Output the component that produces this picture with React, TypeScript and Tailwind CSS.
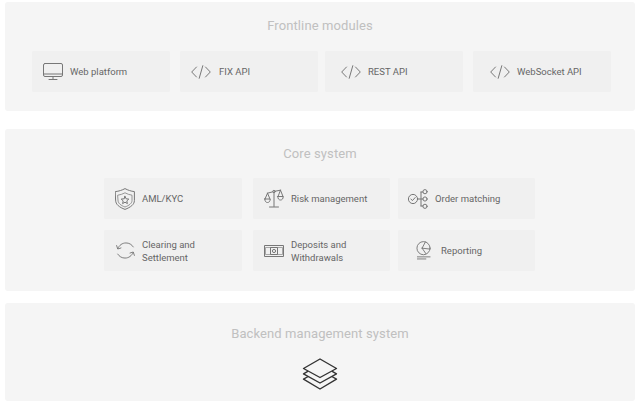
import React from "react";

type IconProps = { className?: string };

const base = {
  fill: "none",
  stroke: "currentColor",
  strokeWidth: 1,
  strokeLinecap: "round" as const,
  strokeLinejoin: "round" as const,
};

const MonitorIcon = ({ className }: IconProps) => (
  <svg viewBox="0 0 20 18" className={className} {...base}>
    <rect x="0.5" y="0.5" width="19" height="13" rx="1.5" />
    <path d="M0.5 11h19M10 13.5v3M6 16.5h8" />
  </svg>
);

const CodeIcon = ({ className }: IconProps) => (
  <svg viewBox="0 0 20 14" className={className} {...base}>
    <path d="M5.5 2 0.7 7l4.8 5M14.5 2l4.8 5-4.8 5M11.8 0.7 8.2 13.3" />
  </svg>
);

const ShieldIcon = ({ className }: IconProps) => (
  <svg viewBox="0 0 20 22" className={className} {...base}>
    <path d="M0.6 3.6C4 3.2 7 2.2 10 0.6c3 1.6 6 2.600 9.400 3V12.500c0 4-3.800 6.800-9.400 8.900C4.400 19.300 0.600 16.500 0.600 12.500Z" />
    <path d="M3 7.200C5.500 6.800 7.800 6 10 4.800c2.200 1.200 4.500 2 7 2.400V12.500c0 2.800-2.800 4.900-7 6.500C5.800 17.400 3 15.300 3 12.500Z" opacity="0.75" />
    <path d="m10 8.300 1.100 2.500 2.700.3-2 1.800.6 2.700-2.400-1.400-2.400 1.400.6-2.700-2-1.800 2.700-.3Z" />
  </svg>
);

const ScaleIcon = ({ className }: IconProps) => (
  <svg viewBox="0 0 20 19" className={className} {...base}>
    <path d="M10 3v14.500M5.500 18h9M3.500 4.200 8.800 2.800M11.200 2.200 16.500 1.200" />
    <circle cx="10" cy="2.500" r="1.200" />
    <path d="M3.500 4.200 1 10M3.500 4.200 6 10M16.500 1.200 14 7.500M16.500 1.200 19 7.500" />
    <path d="M0.800 10h5.400c0 2.200-1 3.500-2.700 3.500S0.800 12.200 0.800 10ZM13.800 7.500h5.400c0 2.200-1 3.500-2.700 3.500S13.800 9.700 13.800 7.500Z" />
  </svg>
);

const OrderIcon = ({ className }: IconProps) => (
  <svg viewBox="0 0 20 20" className={className} {...base}>
    <circle cx="5" cy="10" r="4.600" />
    <path d="m2.900 10 1.500 1.600 2.800-3.100" />
    <path d="M9.600 10h5.400M13 3v14M13 3h2M13 17h2" />
    <circle cx="17" cy="2.700" r="2.100" />
    <circle cx="17" cy="10" r="2.100" />
    <circle cx="17" cy="17.300" r="2.100" />
  </svg>
);

const RefreshIcon = ({ className }: IconProps) => (
  <svg viewBox="0 0 20 18" className={className} {...base}>
    <path d="M1.800 7C3.500 3.300 6.500 1 10.500 1c3.300 0 6 1.500 7.700 4.200" />
    <path d="M0.600 3.800 1.800 7.400 5.200 6.300" />
    <path d="M18.200 11C16.500 14.700 13.500 17 9.500 17c-3.300 0-6-1.500-7.700-4.200" />
    <path d="M19.400 14.200 18.200 10.600 14.800 11.700" />
  </svg>
);

const CashIcon = ({ className }: IconProps) => (
  <svg viewBox="0 0 20 12" className={className} {...base} strokeLinecap="butt">
    <rect x="0.500" y="0.500" width="19" height="11" />
    <path d="M1.500 2.500h17v7h-17Z" opacity="0.6" />
    <rect x="6.500" y="2.500" width="7" height="7" />
    <circle cx="10" cy="6" r="1.600" />
  </svg>
);

const ReportIcon = ({ className }: IconProps) => (
  <svg viewBox="0 0 16 20" className={className} {...base}>
    <circle cx="8" cy="7.500" r="7" />
    <path d="M6.500 7.500 10 0.900M6.500 7.500 15 8.500M6.500 7.500 10.500 13.300" />
    <path d="M1.500 16.800h13.500M1.500 19h9" />
  </svg>
);

const LayersIcon = ({ className }: IconProps) => (
  <svg viewBox="0 0 36 32" className={className} fill="none" stroke="currentColor" strokeWidth={1.4} strokeLinejoin="round">
    <path d="M18 1 34.500 10.500 18 19.500 1.500 10.500Z" />
    <path d="M6.200 13.200 1.500 15.800 18 25 34.500 15.800 29.800 13.200" />
    <path d="M6.200 18.500 1.500 21.200 18 31 34.500 21.200 29.800 18.500" />
  </svg>
);

const Card = ({
  icon,
  label,
  className,
}: {
  icon: React.ReactNode;
  label: React.ReactNode;
  className: string;
}) => (
  <div className={`h-[41px] flex items-center rounded-[1px] bg-[#f0f0f0] text-[#666] ${className}`}>
    {icon}
    <span className="text-[9.5px] leading-[13px]">{label}</span>
  </div>
);

const Title = ({ children, className }: { children: React.ReactNode; className: string }) => (
  <h2 className={`text-center text-[#c0c0c0] text-[13px] leading-5 font-normal tracking-[0.1px] ${className}`}>
    {children}
  </h2>
);

export default function App() {
  return (
    <div className="w-[640px] h-[406px] bg-white pt-[2px] px-[5px] overflow-hidden font-['Roboto',sans-serif]">
      <section className="h-[109px] rounded-[3px] bg-[#f5f5f5] pt-[14px]">
        <Title className="mb-[15px]">Frontline modules</Title>
        <div className="flex pl-[27px]">
          <Card
            className="w-[138px] pl-[11px]"
            icon={<MonitorIcon className="w-[20px] h-[18px] mr-[7px] text-[#777]" />}
            label="Web platform"
          />
          <Card
            className="w-[138px] ml-[10px] pl-[11px]"
            icon={<CodeIcon className="w-[20px] h-[14px] mr-[8px] text-[#777]" />}
            label="FIX API"
          />
          <Card
            className="w-[138px] ml-[7px] pl-[16px]"
            icon={<CodeIcon className="w-[20px] h-[14px] mr-[7px] text-[#777]" />}
            label="REST API"
          />
          <Card
            className="w-[138px] ml-[10px] pl-[17px]"
            icon={<CodeIcon className="w-[20px] h-[14px] mr-[7px] text-[#777]" />}
            label="WebSocket API"
          />
        </div>
      </section>

      <section className="h-[162px] mt-[18px] rounded-[3px] bg-[#f5f5f5] pt-[15px]">
        <Title className="mb-[14px]">Core system</Title>
        <div className="grid grid-cols-[138px_137px_137px] gap-y-[11px] pl-[99px]">
          <Card
            className="pl-[11px]"
            icon={<ShieldIcon className="w-[20px] h-[22px] mr-[7px] text-[#777]" />}
            label="AML/KYC"
          />
          <Card
            className="ml-[11px] w-[137px] pl-[11px]"
            icon={<ScaleIcon className="w-[20px] h-[19px] mr-[7px] text-[#777]" />}
            label="Risk management"
          />
          <Card
            className="ml-[19px] w-[137px] pl-[10px]"
            icon={<OrderIcon className="w-[20px] h-[20px] mr-[7px] text-[#777]" />}
            label="Order matching"
          />
          <Card
            className="pl-[12px]"
            icon={<RefreshIcon className="w-[19px] h-[17px] mr-[7px] text-[#777]" />}
            label={
              <>
                Clearing and
                <br />
                Settlement
              </>
            }
          />
          <Card
            className="ml-[11px] w-[137px] pl-[11px]"
            icon={<CashIcon className="w-[20px] h-[12px] mr-[7px] text-[#777]" />}
            label={
              <>
                Deposits and
                <br />
                Withdrawals
              </>
            }
          />
          <Card
            className="ml-[19px] w-[137px] pl-[18px]"
            icon={<ReportIcon className="w-[15px] h-[19px] mr-[10px] text-[#777]" />}
            label="Reporting"
          />
        </div>
      </section>

      <section className="h-[98px] mt-[12px] rounded-[3px] bg-[#f5f5f5] pt-[21px] flex flex-col items-center">
        <Title className="mb-[14px]">Backend management system</Title>
        <LayersIcon className="w-[36px] h-[32px] text-[#333]" />
      </section>
    </div>
  );
}
